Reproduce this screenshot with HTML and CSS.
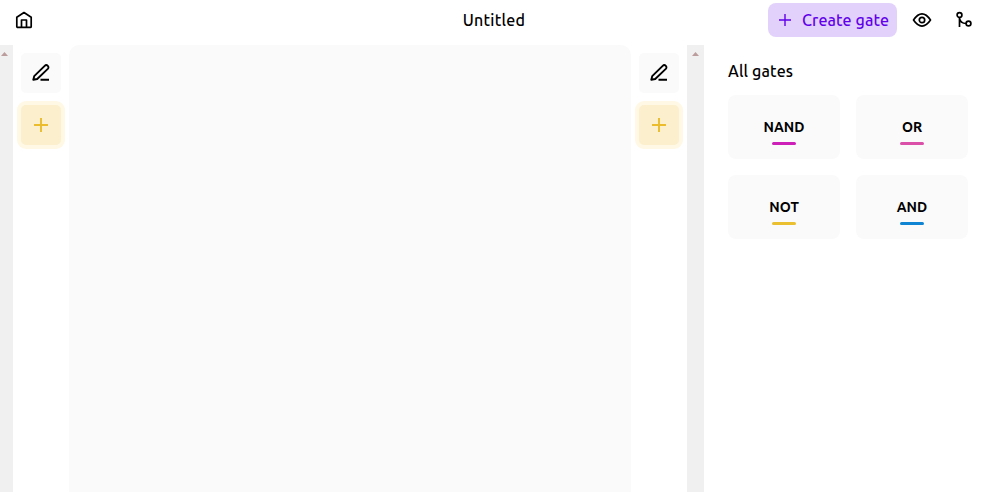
FILE: index.html
```html
<!DOCTYPE html>
<html lang="en">
<head>
<meta charset="utf-8">
<title>Untitled</title>
<link rel="stylesheet" href="styles.css">
</head>
<body>
<header class="topbar">
  <div class="left"><svg class="home" viewBox="0 0 18 18"><path d="M1.8 6.2 9 1.5l7.2 4.7v9.2a1 1 0 0 1-1 1H2.8a1 1 0 0 1-1-1zM6.5 16V9h5v7"/></svg></div>
  <h1 class="title">Untitled</h1>
  <nav class="actions">
    <button class="create"><svg class="plus" viewBox="0 0 14 14"><path d="M7 1v12M1 7h12"/></svg><span class="label">Create gate</span></button>
    <svg class="eye" viewBox="0 0 20 16"><path d="M1.5 8C4.500 3.600 7 1.900 10 1.900S15.500 3.600 18.500 8C15.500 12.400 13 14.100 10 14.100S4.500 12.400 1.500 8z"/><circle cx="10" cy="8" r="2.700"/></svg>
    <svg class="merge" viewBox="0 0 18 18"><circle cx="4.500" cy="4" r="2.400"/><circle cx="13.500" cy="12.500" r="2.400"/><path d="M4.500 6.400V16M4.500 7c.5 3.500 2.500 5.500 6.600 5.500"/></svg>
  </nav>
</header>
<main class="workspace">
  <div class="scroll first"><i class="arrow"></i></div>
  <div class="ports">
    <button class="tool"><svg class="pen" viewBox="0 0 20 20"><path d="M2.300 16.800 3.200 13.200 13.700 2.800a1.900 1.900 0 0 1 3.100 3.100L6.200 16zM9.500 16.800H18"/></svg></button>
    <button class="tool add"><svg class="plus" viewBox="0 0 14 14"><path d="M7 0v14M0 7h14"/></svg></button>
  </div>
  <section class="canvas"></section>
  <div class="ports">
    <button class="tool"><svg class="pen" viewBox="0 0 20 20"><path d="M2.300 16.800 3.200 13.200 13.700 2.800a1.900 1.900 0 0 1 3.100 3.100L6.200 16zM9.500 16.800H18"/></svg></button>
    <button class="tool add"><svg class="plus" viewBox="0 0 14 14"><path d="M7 0v14M0 7h14"/></svg></button>
  </div>
  <div class="scroll"><i class="arrow"></i></div>
  <aside class="library">
    <h2 class="heading">All gates</h2>
    <div class="gates">
      <div class="gate nand"><span class="name">NAND</span></div>
      <div class="gate or"><span class="name">OR</span></div>
      <div class="gate not"><span class="name">NOT</span></div>
      <div class="gate and"><span class="name">AND</span></div>
    </div>
  </aside>
</main>
</body>
</html>
```
FILE: styles.css
```css
* { box-sizing: border-box; }
body {
  margin: 0;
  height: 100vh;
  display: flex;
  flex-direction: column;
  overflow: hidden;
  background: #fff;
  color: #000;
  font: 500 16px/24px Ubuntu, "Noto Sans", sans-serif;
}
button { font: inherit; border: 0; padding: 0; color: inherit; }
svg { display: block; flex: none; fill: none; stroke: currentColor; stroke-width: 1.7; stroke-linejoin: round; }
h1, h2 { margin: 0; font: inherit; }

.topbar { height: 45px; flex: none; display: grid; grid-template-columns: 1fr auto 1fr; padding: 0 12px 0 15px; }
.left { padding-top: 11px; }
.home { width: 18px; height: 18px; }
.title { padding-top: 8px; letter-spacing: .25px; }
.actions { display: flex; justify-content: flex-end; align-items: center; height: 34px; margin-top: 3px; }
.create {
  width: 129px; height: 34px; display: flex; align-items: center; gap: 10px;
  padding-left: 10px; border-radius: 8px; background: #e1d1fb; color: #6200ea; white-space: nowrap;
}
.label { letter-spacing: .1px; }
.plus { width: 14px; height: 14px; }
.create .plus { stroke-width: 1.4; }
.eye { width: 20px; height: 16px; margin: 0 23px 0 15px; }
.merge { width: 18px; height: 18px; }

.workspace { flex: 1; min-height: 0; display: flex; }
.scroll { width: 17px; flex: none; background: #f0f0f0; display: flex; justify-content: center; padding-top: 7px; }
.scroll.first { width: 13px; justify-content: flex-start; padding-left: 1px; }
.arrow { width: 7px; height: 4px; background: #bc9d9d; clip-path: polygon(50% 0, 100% 100%, 0 100%); }
.ports { width: 56px; flex: none; padding: 8px; display: flex; flex-direction: column; gap: 12px; }
.tool { width: 40px; height: 40px; display: grid; place-items: center; border-radius: 5px; background: #fafafa; }
.pen { width: 20px; height: 20px; stroke-width: 1.9; }
.tool.add { background: #fbefce; color: #eabc2e; box-shadow: 0 0 0 4px #fef8e5; }
.add .plus { stroke-width: 1.9; }
.canvas { width: 562px; flex: none; background: #fafafa; border-radius: 10px 10px 0 0; }

.library { flex: 1; padding: 14px 17px 0 24px; }
.heading { letter-spacing: .15px; }
.gates { margin-top: 12px; display: grid; grid-template-columns: 112px 112px; grid-auto-rows: 64px; gap: 16px; }
.gate { display: flex; flex-direction: column; align-items: center; padding-top: 20px; border-radius: 8px; background: #fafafa; font-size: 14px; font-weight: 700; }
.gate::after { content: ""; width: 24px; height: 3px; margin-top: 3px; border-radius: 2px; background: var(--accent); }
.nand { --accent: #cc20b8; }
.or { --accent: #db50a9; }
.not { --accent: #eabf30; }
.and { --accent: #0e84d2; }
```
